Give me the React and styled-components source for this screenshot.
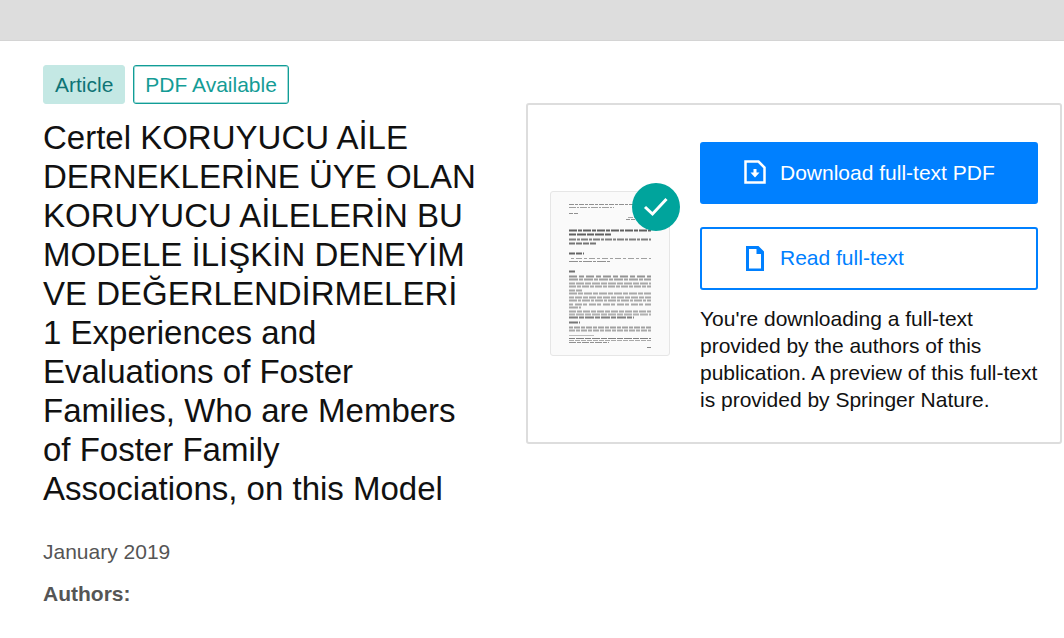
import React from 'react';
import styled, { createGlobalStyle, css } from 'styled-components';

const GlobalStyle = createGlobalStyle`
  *, *::before, *::after {
    box-sizing: border-box;
  }

  body {
    margin: 0;
    background: #ffffff;
    color: #111111;
    font-family: Arial, "Liberation Sans", sans-serif;
    font-size: 21px;
    line-height: 27px;
  }
`;

// Layout
const TopBar = styled.header`
  height: 41px;
  background: #dddddd;
  border-bottom: 1px solid #d4d4d4;
`;

const Main = styled.main`
  display: grid;
  grid-template-columns: minmax(0, 435fr) minmax(0, 536fr);
  column-gap: 48px;
  align-items: start;
  padding: 24px 2px 24px 43px;
`;

const Badges = styled.div`
  display: flex;
  gap: 8px;
`;

const Badge = styled.span`
  padding: 5px 11px;
  border: 1px solid ${props => (props.$outlined ? '#119d97' : '#c4e8e4')};
  border-radius: 3px;
  background: ${props => (props.$outlined ? '#ffffff' : '#c4e8e4')};
  box-shadow: ${props => (props.$outlined ? 'inset 0 0 0 1px #a3dad7' : 'none')};
  color: ${props => (props.$outlined ? '#149c96' : '#0e7476')};
`;

const Title = styled.h1`
  margin: 14px 0 0;
  font-size: 33px;
  font-weight: 400;
  line-height: 39px;
`;

const PublishedDate = styled.div`
  margin-top: 30px;
  color: #555555;
`;

const AuthorsHeading = styled.h2`
  margin: 15px 0 0;
  color: #555555;
  font-size: 21px;
  font-weight: 700;
  line-height: 27px;
`;

// Download card
const Card = styled.aside`
  display: flex;
  align-items: center;
  gap: 30px;
  margin-top: 38px;
  padding: 37px 22px 29px;
  border: 2px solid #dddddd;
  border-radius: 3px;
`;

const Thumbnail = styled.div`
  position: relative;
  flex: 0 0 120px;
  margin-top: -8px;
  border: 1px solid #e6e6e6;
  border-radius: 3px;
  background: #fafafa;
`;

const Preview = styled.svg`
  display: block;
  width: 100%;
  filter: blur(0.5px);
`;

const CheckBadge = styled.span`
  position: absolute;
  top: -9px;
  right: -11px;
  width: 48px;
  height: 48px;

  svg {
    display: block;
  }
`;

const Actions = styled.div`
  display: flex;
  flex: 1;
  flex-direction: column;
  min-width: 0;
`;

const Button = styled.button`
  display: flex;
  align-items: center;
  gap: 13px;
  height: 62px;
  padding: 0 41px 2px;
  border: 2px solid #0080ff;
  border-radius: 3px;
  font: inherit;
  text-align: left;
  white-space: nowrap;
  cursor: pointer;

  ${props => props.$primary
    ? css`
        background: #0080ff;
        color: #ffffff;
      `
    : css`
        margin-top: 23px;
        height: 63px;
        background: #ffffff;
        color: #0080ff;
      `}

  svg {
    flex: none;
  }
`;

const Note = styled.p`
  margin: 15px 0 0;
`;

// Lines of the page preview: [y, x1, x2, stroke, thickness, dashes]
const previewLines = [
  [12, 18, 98, '#909090', 1, '5 1 3 1'],
  [15, 18, 63, '#a0a0a0', 1, '7 1 2 1'],
  [21, 18, 27, '#909090', 1, '4 1'],
  [25, 77, 100, '#a8a8a8', 1, '5 1'],
  [27, 75, 85, '#909090', 1, '4 1'],
  [38, 18, 100, '#606060', 2, '8 1 4 1'],
  [42, 18, 60, '#606060', 2, '7 1 9 1'],
  [47, 18, 100, '#808080', 2, '7 1 3 1'],
  [51, 18, 45, '#757575', 2, '6 1'],
  [61, 18, 33, '#666666', 2, '6 1'],
  [66, 20, 100, '#a0a0a0', 1, '3 2 6 2'],
  [69, 18, 60, '#909090', 1, '9 1 3 1'],
  [79, 18, 24, '#707070', 2, '6 0'],
  [84, 18, 100, '#939393', 2, '8 2 5 2'],
  [87, 18, 100, '#a0a0a0', 2, '9 1 4 1'],
  [91, 18, 100, '#a8a8a8', 2, '6 1 8 1'],
  [94, 18, 100, '#a8a8a8', 2, '7 1 4 1'],
  [98, 18, 31, '#a8a8a8', 2, '6 1'],
  [101, 18, 100, '#a8a8a8', 2, '8 1 5 1'],
  [105, 18, 100, '#a8a8a8', 2, '5 1 7 1'],
  [108, 18, 100, '#a8a8a8', 2, '8 1 3 1'],
  [112, 18, 100, '#a8a8a8', 2, '4 2 7 1'],
  [115, 18, 30, '#a8a8a8', 2, '9 1'],
  [119, 18, 100, '#a8a8a8', 2, '7 1 5 1'],
  [122, 18, 100, '#b0b0b0', 2, '6 1 8 1'],
  [125, 18, 83, '#808080', 2, '9 1 5 1'],
  [130, 18, 29, '#777777', 2, '9 1'],
  [135, 18, 100, '#a0a0a0', 2, '4 1 6 1'],
  [138, 18, 100, '#a8a8a8', 2, '6 1 4 1'],
  [143, 18, 43, '#bbbbbb', 1, '25 0'],
  [146, 18, 100, '#808080', 1, '6 1 8 1'],
  [148, 18, 100, '#a8a8a8', 1, '5 1'],
  [150, 18, 58, '#909090', 1, '7 1 4 1'],
  [155, 96, 100, '#888888', 1, '4 0'],
];

const PagePreview = () => (
  <Preview viewBox="0 0 118 163" role="img" aria-label="First page preview">
    {previewLines.map(([y, x1, x2, stroke, thickness, dashes]) => (
      <line
        key={y}
        x1={x1}
        x2={x2}
        y1={y + 0.5}
        y2={y + 0.5}
        stroke={stroke}
        strokeWidth={thickness}
        strokeDasharray={dashes}
      />
    ))}
  </Preview>
);

const CheckIcon = () => (
  <svg width="48" height="48" viewBox="0 0 48 48" aria-hidden="true">
    <circle cx="24" cy="24" r="24" fill="#00a49c" />
    <path d="M13 24L20.5 31L34.5 16" fill="none" stroke="#ffffff" strokeWidth="3" />
  </svg>
);

const DownloadIcon = () => (
  <svg width="24" height="26" viewBox="0 0 24 26" fill="none" aria-hidden="true">
    <path d="M2.5 2.5H15.5L21.5 8.5V23.5H2.5Z" stroke="currentColor" strokeWidth="2.5" />
    <path d="M10.5 10H13.5V13.5H16.5L12 18.5L7.5 13.5H10.5Z" fill="currentColor" />
  </svg>
);

const FileIcon = () => (
  <svg width="24" height="26" viewBox="0 0 24 26" aria-hidden="true">
    <path
      d="M3 1H15.5L21 6.5V26H3ZM6 4V23.5H18V9H13.5V4Z"
      fill="currentColor"
      fillRule="evenodd"
    />
  </svg>
);

const App = () => {
  return (
    <>
      <GlobalStyle />
      <TopBar />
      <Main>
        <article>
          <Badges>
            <Badge>Article</Badge>
            <Badge $outlined>PDF Available</Badge>
          </Badges>
          <Title lang="tr">
            Certel KORUYUCU AİLE DERNEKLERİNE ÜYE OLAN KORUYUCU AİLELERİN BU MODELE İLİŞKİN DENEYİM VE
            DEĞERLENDİRMELERİ 1 Experiences and Evaluations of Foster Families, Who are Members of
            Foster Family Associations, on this Model
          </Title>
          <PublishedDate>January 2019</PublishedDate>
          <AuthorsHeading>Authors:</AuthorsHeading>
        </article>

        <Card>
          <Thumbnail>
            <PagePreview />
            <CheckBadge>
              <CheckIcon />
            </CheckBadge>
          </Thumbnail>
          <Actions>
            <Button type="button" $primary>
              <DownloadIcon />
              Download full-text PDF
            </Button>
            <Button type="button">
              <FileIcon />
              Read full-text
            </Button>
            <Note>
              You're downloading a full-text provided by the authors of this publication. A preview of
              this full-text is provided by Springer Nature.
            </Note>
          </Actions>
        </Card>
      </Main>
    </>
  );
};

export default App;
